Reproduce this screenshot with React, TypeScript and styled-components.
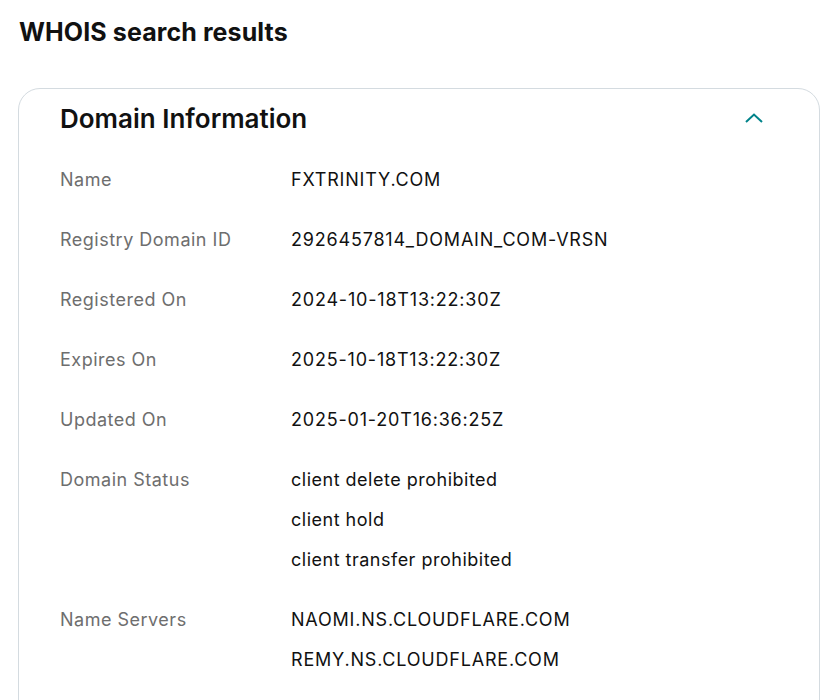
import styled, { createGlobalStyle } from "styled-components";

const GlobalStyle = createGlobalStyle`
  body {
    margin: 0;
    background: #ffffff;
    font-family: Inter, "Noto Sans", sans-serif;
    color: #111111;
  }
`;

const Page = styled.div`
  padding: 14px 19px 0 18px;
`;

const Title = styled.h1`
  margin: 0 0 38px 1px;
  font-size: 25px;
  line-height: 36px;
  font-weight: 700;
  letter-spacing: 0.1px;
`;

const Card = styled.section`
  border: 1px solid #d4dbe0;
  border-radius: 22px;
  padding: 11px 41px 20px 41px;
  min-height: 640px;
`;

const CardHeader = styled.div`
  display: flex;
  align-items: center;
  justify-content: space-between;
  height: 36px;
  margin-bottom: 24px;
`;

const Heading = styled.h2`
  margin: 0;
  font-size: 26px;
  font-weight: 600;
  letter-spacing: 0;
`;

const Toggle = styled.button`
  border: none;
  background: none;
  padding: 0;
  margin-right: 14px;
  display: flex;
  color: #00838a;
  cursor: pointer;
`;

const Rows = styled.dl`
  margin: 0;
  display: flex;
  flex-direction: column;
  gap: 20px;
`;

const Row = styled.div`
  display: grid;
  grid-template-columns: 231px 1fr;
`;

const Label = styled.dt`
  font-size: 18px;
  line-height: 40px;
  letter-spacing: 0.5px;
  color: #6e6e6e;
`;

const Values = styled.dd`
  margin: 0;
  display: flex;
  flex-direction: column;
`;

const Value = styled.span<{ $caps?: boolean }>`
  font-size: 18px;
  line-height: 40px;
  letter-spacing: ${(p) => (p.$caps ? "0.8px" : "0.5px")};
  color: #111111;
`;

const rows: { label: string; values: string[] }[] = [
  { label: "Name", values: ["FXTRINITY.COM"] },
  { label: "Registry Domain ID", values: ["2926457814_DOMAIN_COM-VRSN"] },
  { label: "Registered On", values: ["2024-10-18T13:22:30Z"] },
  { label: "Expires On", values: ["2025-10-18T13:22:30Z"] },
  { label: "Updated On", values: ["2025-01-20T16:36:25Z"] },
  {
    label: "Domain Status",
    values: ["client delete prohibited", "client hold", "client transfer prohibited"],
  },
  {
    label: "Name Servers",
    values: ["NAOMI.NS.CLOUDFLARE.COM", "REMY.NS.CLOUDFLARE.COM"],
  },
];

function App() {
  return (
    <>
      <GlobalStyle />
      <Page>
        <Title>WHOIS search results</Title>
        <Card>
          <CardHeader>
            <Heading>Domain Information</Heading>
            <Toggle aria-label="Collapse">
              <svg width="20" height="12" viewBox="0 0 20 12" fill="none">
                <path d="M2 10 L10 2.5 L18 10" stroke="currentColor" strokeWidth="2" />
              </svg>
            </Toggle>
          </CardHeader>
          <Rows>
            {rows.map((r) => (
              <Row key={r.label}>
                <Label>{r.label}</Label>
                <Values>
                  {r.values.map((v) => (
                    <Value key={v} $caps={v === v.toUpperCase()}>
                      {v}
                    </Value>
                  ))}
                </Values>
              </Row>
            ))}
          </Rows>
        </Card>
      </Page>
    </>
  );
}

export default App;
